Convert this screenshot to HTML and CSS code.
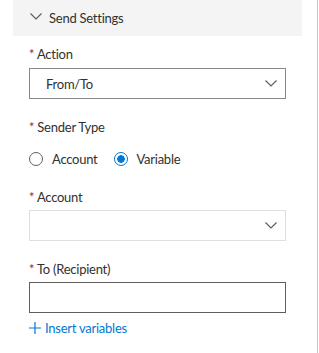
FILE: index.html
```html
<!DOCTYPE html>
<html>
<head>
  <meta charset="UTF-8">
  <title>Send Settings</title>
  <link rel="stylesheet" href="styles.css">
</head>
<body>
  <div class="panel">
    <div class="section-head">
      <svg class="chev" width="12" height="7" viewBox="0 0 12 7"><path d="M0.5 0.5 L6 6 L11.5 0.5" fill="none" stroke="#605e5c" stroke-width="1.2"/></svg>
      <span>Send Settings</span>
    </div>

    <div class="form">
      <div class="field">
        <label class="label"><span class="req">*</span> Action</label>
        <div class="select">
          <span>From/To</span>
          <svg width="12" height="7" viewBox="0 0 12 7"><path d="M0.5 0.5 L6 6 L11.5 0.5" fill="none" stroke="#605e5c" stroke-width="1.2"/></svg>
        </div>
      </div>

      <div class="field">
        <label class="label"><span class="req">*</span> Sender Type</label>
        <div class="radios">
          <span class="radio"><span class="dot"></span>Account</span>
          <span class="radio on"><span class="dot"></span>Variable</span>
        </div>
      </div>

      <div class="field">
        <label class="label"><span class="req">*</span> Account</label>
        <div class="select disabled">
          <span></span>
          <svg width="12" height="7" viewBox="0 0 12 7"><path d="M0.5 0.5 L6 6 L11.5 0.5" fill="none" stroke="#605e5c" stroke-width="1.2"/></svg>
        </div>
      </div>

      <div class="field">
        <label class="label"><span class="req">*</span> To (Recipient)</label>
        <div class="textbox"></div>
        <a class="insert" href="#">
          <svg width="12" height="12" viewBox="0 0 12 12"><path d="M6 0 V12 M0 6 H12" stroke="#0078d4" stroke-width="1.2"/></svg>
          Insert variables
        </a>
      </div>
    </div>
  </div>
</body>
</html>
```

FILE: styles.css
```css
body {
  margin: 0;
  font-family: Lato, "Open Sans", sans-serif;
  font-size: 13px;
  letter-spacing: -0.25px;
  color: #323130;
  background: #fff;
}
.panel {
  width: 317px;
  height: 353px;
  border-right: 1px solid #c8c8c8;
}
.section-head {
  margin-left: 13px;
  width: 289px;
  height: 36px;
  background: #f4f4f4;
  display: flex;
  align-items: center;
  gap: 7px;
  padding-left: 17px;
  box-sizing: border-box;
}
.section-head .chev {
  margin-top: -4px;
}
.form {
  padding: 8px 0 0 29px;
}
.field {
  margin-bottom: 18px;
}
.label {
  display: block;
  line-height: 20px;
  margin-bottom: 4px;
}
.req {
  color: #a4262c;
}
.select {
  width: 257px;
  height: 31px;
  box-sizing: border-box;
  border: 1px solid #8a8886;
  display: flex;
  align-items: center;
  justify-content: space-between;
  padding: 0 8px 0 16px;
}
.select.disabled {
  border-color: #e1dfdd;
  margin-top: -1px;
}
.radios {
  display: flex;
  gap: 16px;
  height: 20px;
  margin-top: 12px;
}
.radio {
  display: flex;
  align-items: center;
  gap: 9px;
}
.dot {
  width: 14px;
  height: 14px;
  border-radius: 50%;
  border: 1px solid #605e5c;
  box-sizing: border-box;
}
.radio.on .dot {
  border-color: #0078d4;
  background: radial-gradient(circle, #0078d4 0 3.5px, #fff 4px);
}
.textbox {
  width: 257px;
  height: 31px;
  margin-top: -1px;
  box-sizing: border-box;
  border: 1px solid #605e5c;
}
.insert {
  display: flex;
  align-items: center;
  gap: 4px;
  margin-top: 5px;
  height: 20px;
  color: #0078d4;
  text-decoration: none;
}
```
